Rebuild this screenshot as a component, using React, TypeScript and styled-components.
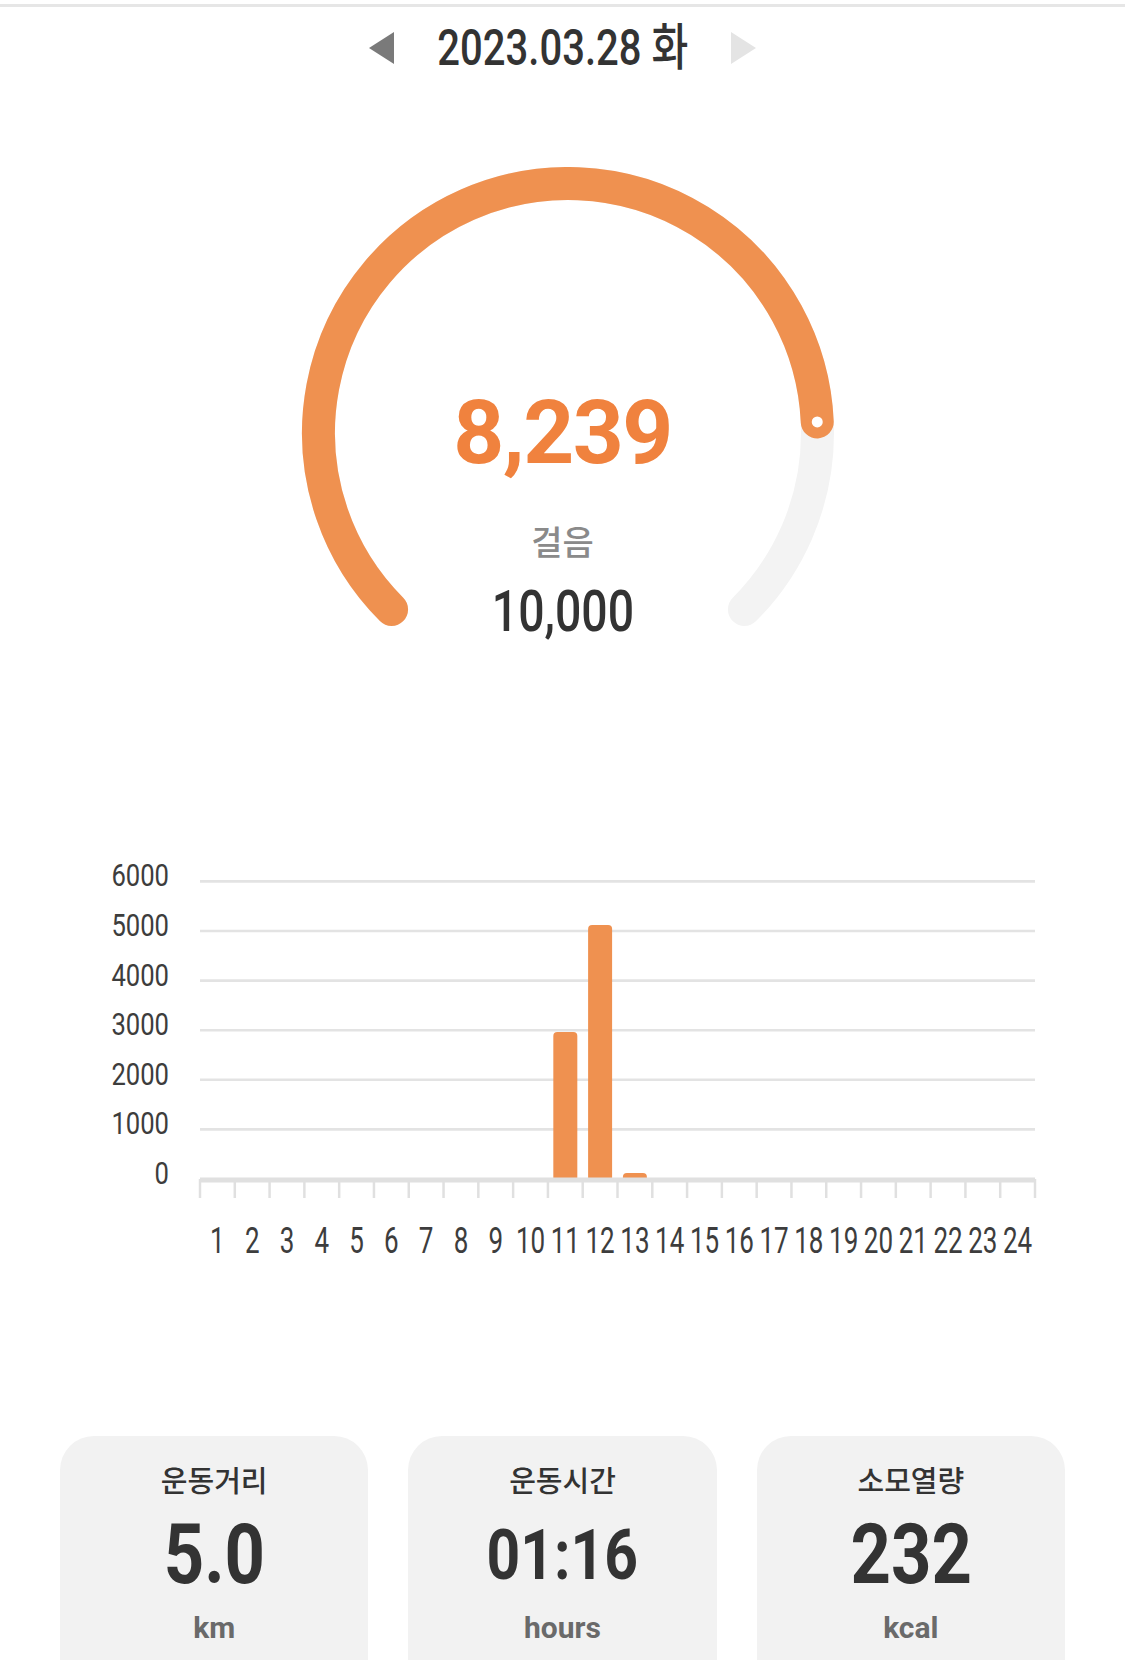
import styled, { createGlobalStyle } from 'styled-components';

const ROBOTO = `Roboto, "Noto Sans CJK KR", sans-serif`;
const KR = `"Noto Sans CJK KR", "Noto Sans", sans-serif`;

const ORANGE = '#EF9150';

const GlobalStyle = createGlobalStyle`
  html, body {
    margin: 0;
    padding: 0;
    background: #ffffff;
  }
  body {
    font-family: ${KR};
    color: #333333;
  }
`;

// 시간대별 걸음 수
const hourly = [0, 0, 0, 0, 0, 0, 0, 0, 0, 0, 2965, 5120, 120, 0, 0, 0, 0, 0, 0, 0, 0, 0, 0, 0];

const stats = [
  { label: '운동거리', value: '5.0', unit: 'km', size: 84 },
  { label: '운동시간', value: '01:16', unit: 'hours', size: 70 },
  { label: '소모열량', value: '232', unit: 'kcal', size: 84 },
];

const STEPS = 8239;
const GOAL = 10000;

function polar(cx: number, cy: number, r: number, deg: number) {
  const rad = (deg * Math.PI) / 180;
  return { x: cx + r * Math.sin(rad), y: cy - r * Math.cos(rad) };
}

function arcPath(cx: number, cy: number, r: number, from: number, to: number) {
  const a = polar(cx, cy, r, from);
  const b = polar(cx, cy, r, to);
  const large = to - from > 180 ? 1 : 0;
  return `M ${a.x} ${a.y} A ${r} ${r} 0 ${large} 1 ${b.x} ${b.y}`;
}

function Gauge() {
  const cx = 270;
  const cy = 266;
  const r = 249.5;
  const end = -135 + 270 * (STEPS / GOAL);
  const dot = polar(cx, cy, r, end);

  return (
    <St.GaugeSvg width={540} height={470} viewBox="0 0 540 470">
      <path d={arcPath(cx, cy, r, -135, 135)} fill="none" stroke="#f3f3f3" strokeWidth={33} strokeLinecap="round" />
      <path d={arcPath(cx, cy, r, -135, end)} fill="none" stroke={ORANGE} strokeWidth={33} strokeLinecap="round" />
      <circle cx={dot.x} cy={dot.y} r={5.5} fill="#ffffff" />
    </St.GaugeSvg>
  );
}

function HourChart() {
  const left = 200;
  const right = 1035;
  const zeroY = 1179;
  const step = 49.6; // px per 1000
  const band = (right - left) / 24;
  const barW = 24;

  return (
    <St.ChartSvg width={1125} height={420} viewBox="0 850 1125 420">
      {[6, 5, 4, 3, 2, 1].map((n) => (
        <line key={n} x1={left} x2={right} y1={zeroY - n * step} y2={zeroY - n * step} stroke="#e3e3e3" strokeWidth={2.6} />
      ))}
      {[6, 5, 4, 3, 2, 1, 0].map((n) => {
        const label = String(n * 1000);
        return (
          <text
            key={n}
            x={169}
            y={zeroY - n * step + 5}
            textAnchor="end"
            fontSize={32}
            fill="#3d3d3d"
            fontFamily={ROBOTO}
            textLength={label.length * 14.4}
            lengthAdjust="spacingAndGlyphs"
          >
            {label}
          </text>
        );
      })}
      {hourly.map((v, i) => {
        if (!v) return null;
        const h = (v / 1000) * step;
        const x = left + i * band + (band - barW) / 2;
        return <path key={i} d={`M ${x} ${zeroY} V ${zeroY - h + 4} Q ${x} ${zeroY - h} ${x + 4} ${zeroY - h} H ${x + barW - 4} Q ${x + barW} ${zeroY - h} ${x + barW} ${zeroY - h + 4} V ${zeroY} Z`} fill={ORANGE} />;
      })}
      <line x1={left} x2={right} y1={zeroY + 1} y2={zeroY + 1} stroke="#e0e0e0" strokeWidth={5} />
      {Array.from({ length: 25 }, (_, i) => (
        <line key={i} x1={left + i * band} x2={left + i * band} y1={zeroY} y2={1198} stroke="#e0e0e0" strokeWidth={2.5} />
      ))}
      {hourly.map((_, i) => {
        const label = String(i + 1);
        return (
          <text
            key={i}
            x={left + (i + 0.5) * band}
            y={1253}
            textAnchor="middle"
            fontSize={37}
            fill="#3d3d3d"
            fontFamily={ROBOTO}
            textLength={label.length * 14.6}
            lengthAdjust="spacingAndGlyphs"
          >
            {label}
          </text>
        );
      })}
    </St.ChartSvg>
  );
}

export default function App() {
  return (
    <St.Page>
      <GlobalStyle />
      <St.TopLine />
      <St.DateRow>
        <St.Arrow $dir="left" />
        <St.DateBox>
          <St.DateText>2023.03.28 화</St.DateText>
        </St.DateBox>
        <St.Arrow $dir="right" />
      </St.DateRow>

      <St.GaugeWrapper>
        <Gauge />
        <St.GaugeText>
          <St.StepCount>{STEPS.toLocaleString('en-US')}</St.StepCount>
          <St.StepLabel>걸음</St.StepLabel>
          <St.Goal>{GOAL.toLocaleString('en-US')}</St.Goal>
        </St.GaugeText>
      </St.GaugeWrapper>

      <HourChart />

      <St.CardRow>
        {stats.map((s) => (
          <St.Card key={s.label}>
            <St.CardLabel>{s.label}</St.CardLabel>
            <St.CardValueSlot>
              <St.CardValue $size={s.size}>{s.value}</St.CardValue>
            </St.CardValueSlot>
            <St.CardUnit>{s.unit}</St.CardUnit>
          </St.Card>
        ))}
      </St.CardRow>
    </St.Page>
  );
}

const St = {
  Page: styled.div`
    width: 1125px;
    height: 1660px;
    overflow: hidden;
    display: flex;
    flex-direction: column;

    & > * {
      flex-shrink: 0;
    }
  `,
  TopLine: styled.div`
    margin-top: 4px;
    height: 3px;
    background: #e6e6e6;
  `,
  DateRow: styled.div`
    height: 81px;
    display: flex;
    align-items: center;
    justify-content: center;
    gap: 42px;
  `,
  Arrow: styled.span<{ $dir: 'left' | 'right' }>`
    width: 0;
    height: 0;
    border-top: 16px solid transparent;
    border-bottom: 16px solid transparent;
    ${({ $dir }) =>
      $dir === 'left'
        ? `border-right: 25px solid #7a7a7a;`
        : `border-left: 25px solid #e4e4e4;`}
  `,
  DateBox: styled.div`
    width: 253px;
    display: flex;
    justify-content: center;
  `,
  DateText: styled.span`
    flex-shrink: 0;
    display: inline-block;
    white-space: nowrap;
    font-family: ${ROBOTO};
    font-weight: 500;
    font-size: 50px;
    line-height: 50px;
    color: #333333;
    transform: scaleX(0.8);
  `,
  GaugeWrapper: styled.div`
    margin-top: 79px;
    height: 470px;
    display: grid;
    grid-template-areas: 'stack';
  `,
  GaugeSvg: styled.svg`
    grid-area: stack;
    justify-self: center;
    margin-left: 10px;
    display: block;
  `,
  GaugeText: styled.div`
    grid-area: stack;
    justify-self: center;
    align-self: start;
    padding-top: 221px;
    display: flex;
    flex-direction: column;
    align-items: center;
  `,
  StepCount: styled.div`
    font-family: Roboto, sans-serif;
    font-weight: 700;
    font-size: 89px;
    line-height: 89px;
    letter-spacing: -1.5px;
    color: #F0823E;
  `,
  StepLabel: styled.div`
    margin-top: 47px;
    font-family: ${KR};
    font-weight: 500;
    font-size: 34px;
    line-height: 34px;
    color: #8a8a8a;
  `,
  Goal: styled.div`
    margin-top: 24px;
    font-family: ${ROBOTO};
    font-weight: 500;
    font-size: 58px;
    line-height: 58px;
    color: #333333;
    transform: scaleX(0.8);
  `,
  ChartSvg: styled.svg`
    margin-top: 213px;
    display: block;
  `,
  CardRow: styled.div`
    margin-top: 166px;
    padding: 0 60px;
    display: grid;
    grid-template-columns: repeat(3, 1fr);
    gap: 40px;
  `,
  Card: styled.div`
    height: 280px;
    padding-top: 29px;
    box-sizing: border-box;
    border-radius: 34px;
    background: #f2f2f2;
    display: flex;
    flex-direction: column;
    align-items: center;
  `,
  CardLabel: styled.div`
    font-family: ${KR};
    font-size: 29px;
    line-height: 29px;
    font-weight: 500;
    color: #333333;
  `,
  CardValueSlot: styled.div`
    margin-top: 19px;
    height: 84px;
    display: flex;
    align-items: center;
  `,
  CardValue: styled.div<{ $size: number }>`
    font-family: ${ROBOTO};
    font-weight: 700;
    font-size: ${({ $size }) => $size}px;
    line-height: 1;
    color: #333333;
    transform: scaleX(0.84);
  `,
  CardUnit: styled.div`
    margin-top: 16px;
    font-family: Roboto, sans-serif;
    font-weight: 700;
    font-size: 30px;
    line-height: 30px;
    color: #6a6a6a;
  `,
};
